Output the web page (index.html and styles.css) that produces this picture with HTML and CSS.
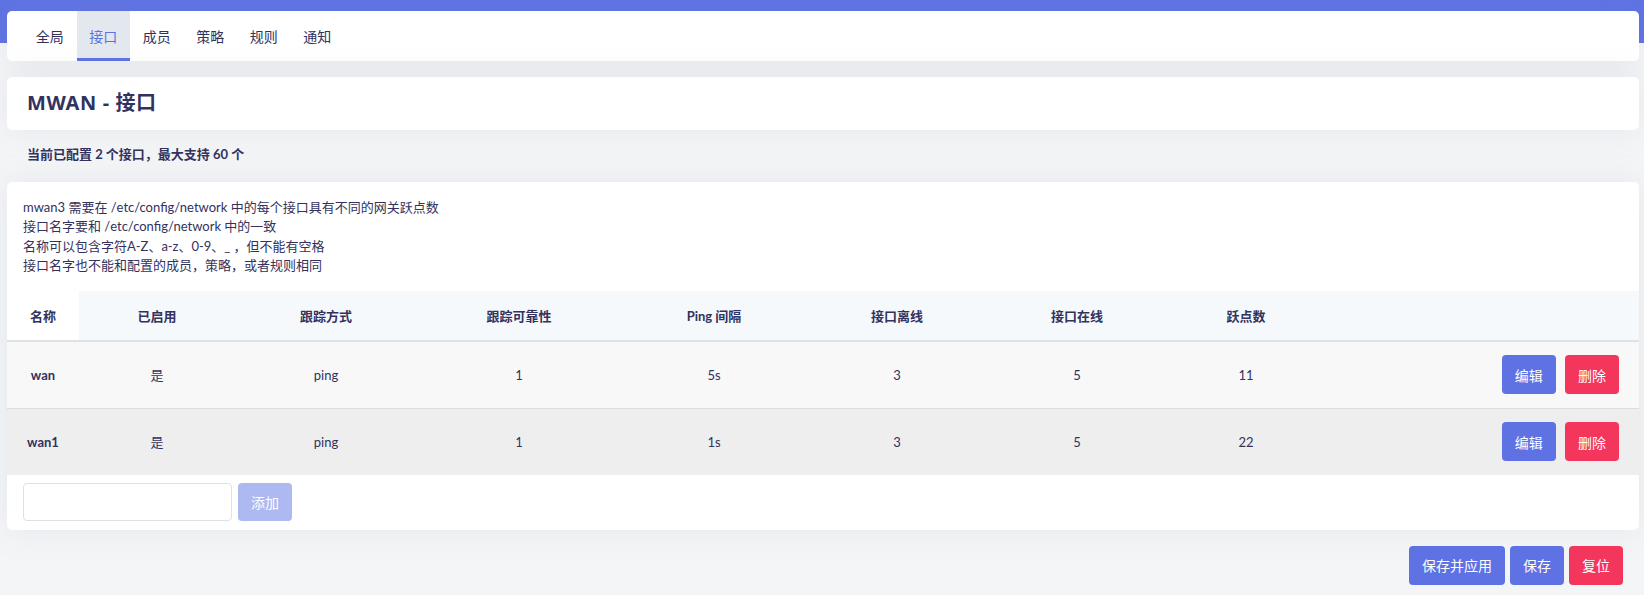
FILE: index.html
```html
<!DOCTYPE html>
<html lang="zh-CN">
<head>
  <meta charset="UTF-8">
  <meta name="viewport" content="width=device-width, initial-scale=1.0">
  <title>MWAN - 接口</title>
  <link rel="stylesheet" href="styles.css">
</head>
<body>
  <div class="page">
    <nav class="card tabs">
      <a class="tab">全局</a>
      <a class="tab active">接口</a>
      <a class="tab">成员</a>
      <a class="tab">策略</a>
      <a class="tab">规则</a>
      <a class="tab">通知</a>
    </nav>

    <div class="card title-card">
      <h2>MWAN - 接口</h2>
    </div>

    <div class="status">当前已配置 2 个接口，最大支持 60 个</div>

    <div class="card table-card">
      <div class="desc">
        mwan3 需要在 /etc/config/network 中的每个接口具有不同的网关跃点数<br>
        接口名字要和 /etc/config/network 中的一致<br>
        名称可以包含字符A-Z、a-z、0-9、_ ，但不能有空格<br>
        接口名字也不能和配置的成员，策略，或者规则相同
      </div>

      <table class="iface-table">
        <colgroup>
          <col style="width: 72px">
          <col style="width: 156px">
          <col style="width: 182px">
          <col style="width: 204px">
          <col style="width: 186px">
          <col style="width: 180px">
          <col style="width: 180px">
          <col style="width: 158px">
          <col>
        </colgroup>
        <thead>
          <tr>
            <th class="name-col">名称</th>
            <th>已启用</th>
            <th>跟踪方式</th>
            <th>跟踪可靠性</th>
            <th>Ping 间隔</th>
            <th>接口离线</th>
            <th>接口在线</th>
            <th>跃点数</th>
            <th></th>
          </tr>
        </thead>
        <tbody>
          <tr class="row-1">
            <td class="name">wan</td>
            <td>是</td>
            <td>ping</td>
            <td>1</td>
            <td>5s</td>
            <td>3</td>
            <td>5</td>
            <td>11</td>
            <td class="ops">
              <button class="btn btn-primary">编辑</button>
              <button class="btn btn-danger">删除</button>
            </td>
          </tr>
          <tr class="row-2">
            <td class="name">wan1</td>
            <td>是</td>
            <td>ping</td>
            <td>1</td>
            <td>1s</td>
            <td>3</td>
            <td>5</td>
            <td>22</td>
            <td class="ops">
              <button class="btn btn-primary">编辑</button>
              <button class="btn btn-danger">删除</button>
            </td>
          </tr>
        </tbody>
      </table>

      <div class="add-row">
        <input type="text" class="add-input">
        <button class="btn btn-primary btn-disabled">添加</button>
      </div>
    </div>

    <div class="actions">
      <button class="btn btn-primary">保存并应用</button>
      <button class="btn btn-primary">保存</button>
      <button class="btn btn-danger">复位</button>
    </div>
  </div>
</body>
</html>
```

FILE: styles.css
```css
body {
  margin: 0;
  font-family: "Lato", "Noto Sans CJK SC", sans-serif;
  color: #32325d;
  background: linear-gradient(to bottom, #5e72e4 0, #5e72e4 43px, #f4f5f7 43px);
  min-height: 595px;
}

.page {
  padding: 11px 5px 9px 7px;
}

.card {
  background: #ffffff;
  border-radius: 5px;
  box-shadow: 0 0 2rem 0 rgba(136, 152, 170, 0.15);
}

/* tabs */
.tabs {
  display: flex;
  height: 50px;
  padding-left: 16px;
}

.tab {
  display: flex;
  align-items: center;
  padding: 0 12.75px;
  font-size: 14px;
  color: #32325d;
  box-sizing: border-box;
  border-bottom: 3px solid transparent;
  padding-top: 2px;
}

.tab.active {
  background: #e3e7ee;
  color: #5e72e4;
  border-bottom-color: #5e72e4;
}

/* title */
.title-card {
  margin-top: 16px;
  padding: 13px 20px 14px;
}

.title-card h2 {
  margin: 0;
  font-family: "Noto Sans", "Noto Sans CJK SC", sans-serif;
  font-size: 20px;
  line-height: 26px;
  font-weight: 700;
  letter-spacing: 0.6px;
  color: #32325d;
}

.status {
  padding: 15px 20px 17px;
  font-size: 13px;
  line-height: 19.5px;
  font-weight: 700;
  color: #32325d;
}

/* table card */
.table-card {
  padding-bottom: 9px;
}

.desc {
  padding: 16px 16px 15px;
  font-size: 13px;
  line-height: 19.5px;
  color: #32325d;
}

.iface-table {
  width: 100%;
  border-collapse: collapse;
  table-layout: fixed;
  font-size: 13px;
}

.iface-table th {
  height: 49px;
  padding: 0;
  background: #f6f9fc;
  font-weight: 700;
  text-align: center;
  border-bottom: 2px solid #dee2e6;
}

.iface-table th.name-col {
  background: #ffffff;
}

.iface-table td {
  height: 66px;
  padding: 0;
  text-align: center;
}

.iface-table td.name {
  font-weight: 700;
}

.row-1 td {
  background: #f8f8f8;
  border-bottom: 1px solid #dddddd;
}

.row-2 td {
  background: #eeeeee;
}

.iface-table td.ops {
  text-align: right;
  padding-right: 20px;
}

.ops .btn + .btn {
  margin-left: 6px;
}

/* buttons */
.btn {
  height: 39px;
  padding: 0 13px;
  border: none;
  border-radius: 4px;
  font-family: inherit;
  font-size: 14px;
  color: #ffffff;
  cursor: pointer;
  vertical-align: middle;
}

.btn-primary {
  background: #5e72e4;
}

.btn-danger {
  background: #f5365c;
}

.btn-disabled {
  background: #aeb8f1;
  cursor: default;
}

.add-row {
  display: flex;
  gap: 6px;
  padding: 8px 16px 0;
}

.add-input {
  width: 209px;
  height: 38px;
  box-sizing: border-box;
  border: 1px solid #dee2e6;
  border-radius: 4px;
  background: #ffffff;
}

.add-row .btn {
  height: 38px;
}

/* bottom actions */
.actions {
  display: flex;
  justify-content: flex-end;
  gap: 5px;
  margin-top: 16px;
  padding-right: 16px;
}
```
